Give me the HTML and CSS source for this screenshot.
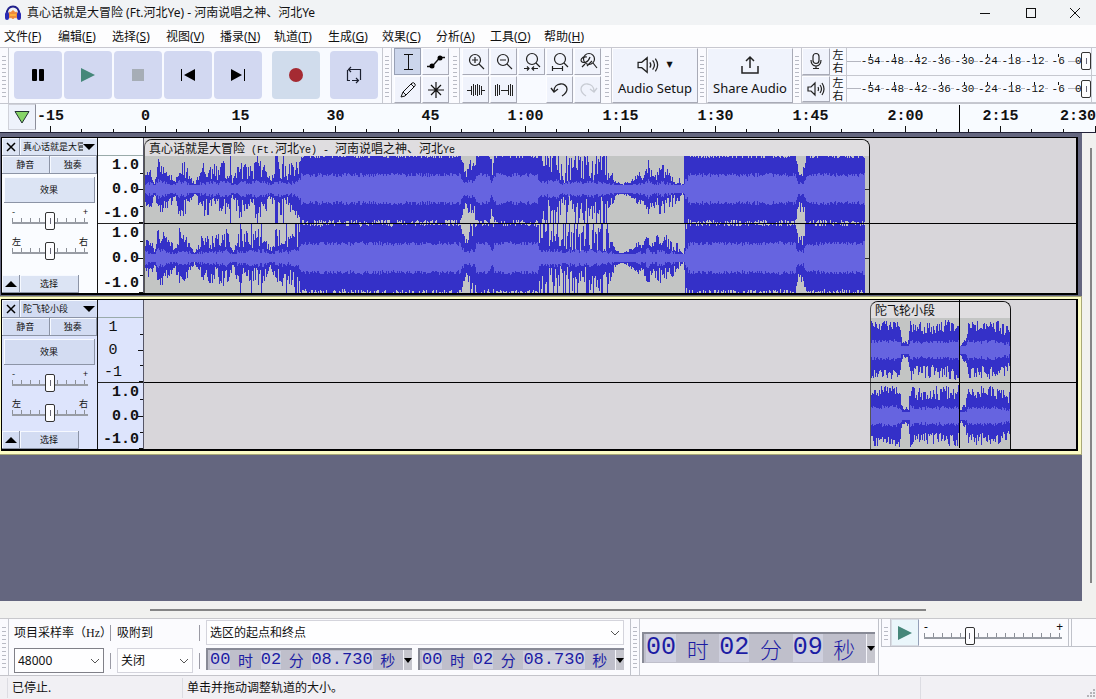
FILE: index.html
```html
<!DOCTYPE html>
<html lang="zh-CN">
<head>
<meta charset="utf-8">
<title>真心话就是大冒险 (Ft.河北Ye) - 河南说唱之神、河北Ye</title>
<link rel="stylesheet" href="styles.css">
</head>
<body>
<header class="titlebar">
  <svg class="logo" width="18" height="18" viewBox="0 0 18 18">
    <path d="M4 11c1-3 2-4 3-2 1-3 3-3 4 0 1-2 2-1 3 2-1 3-2 4-3 2-1 2-3 2-4 0-1 2-2 1-3-2z" fill="#f08a3c" stroke="#f08a3c"/>
    <path d="M6 11h6" stroke="#ffb03c" stroke-width="2"/>
    <path d="M3 10C2 0 16 0 15 10" fill="none" stroke="#20208c" stroke-width="2"/>
    <rect x="1" y="8" width="4" height="8" rx="2" fill="#2c2cb4"/>
    <rect x="13" y="8" width="4" height="8" rx="2" fill="#2c2cb4"/>
  </svg>
  <h1 class="title">真心话就是大冒险 (Ft.河北Ye) - 河南说唱之神、河北Ye</h1>
  <div class="win">
    <button aria-label="最小化"><svg width="12" height="12"><path d="M1 6.5h10" stroke="#111"/></svg></button>
    <button aria-label="最大化"><svg width="12" height="12"><rect x="1.5" y="1.5" width="9" height="9" fill="none" stroke="#111"/></svg></button>
    <button aria-label="关闭"><svg width="12" height="12"><path d="M1 1l10 10M11 1L1 11" stroke="#111"/></svg></button>
  </div>
</header>

<nav class="menubar">
  <button>文件(<u>F</u>)</button><button>编辑(<u>E</u>)</button><button>选择(<u>S</u>)</button><button>视图(<u>V</u>)</button><button>播录(<u>N</u>)</button><button>轨道(<u>T</u>)</button><button>生成(<u>G</u>)</button><button>效果(<u>C</u>)</button><button>分析(<u>A</u>)</button><button>工具(<u>O</u>)</button><button>帮助(<u>H</u>)</button>
</nav>

<section class="toolbars">
  <i class="grip"></i>
  <div class="transport">
    <button aria-label="暂停"><svg width="16" height="16"><rect x="2" y="2" width="5" height="12" rx="1"/><rect x="9" y="2" width="5" height="12" rx="1"/></svg></button>
    <button aria-label="播放"><svg width="16" height="16"><path d="M1 1l14 7-14 7z" fill="#46877a"/></svg></button>
    <button aria-label="停止"><svg width="16" height="16"><path d="M2 2h12v12H2z" fill="#a6adb6"/></svg></button>
    <button aria-label="跳至开头"><svg width="16" height="16"><path d="M1 2h1v12H1zM15 2v12L4 8z"/></svg></button>
    <button aria-label="跳至结尾"><svg width="16" height="16"><path d="M14 2h1v12h-1zM1 2v12l11-6z"/></svg></button>
    <button class="rec" aria-label="录制"><svg width="16" height="16"><circle cx="8" cy="8" r="7" fill="#a52a32"/></svg></button>
    <button class="loop" aria-label="循环"><svg width="18" height="18" fill="none" stroke="#1c2030" stroke-width="1.200"><path d="M5 14.500H2.500V4M4 3.500h11.500V14M6 1L3.500 3.500 6 6M7 14.500h6M11 12l2.500 2.500L11 17"/></svg></button>
  </div>
  <i class="grip"></i>
  <div class="keys two">
    <button class="on" aria-label="选择工具"><svg width="20" height="20" fill="none" stroke="#111"><path d="M6 2.500h9M6 17.500h9M10.500 2.500v15"/></svg></button>
    <button aria-label="包络工具"><svg width="20" height="20"><path d="M1 14.500h5l8-9h5" fill="none" stroke="#111" stroke-width="1.300"/><circle cx="6" cy="14" r="2.500"/><circle cx="14" cy="6" r="2.500"/></svg></button>
    <button aria-label="绘制工具"><svg width="20" height="20" fill="none" stroke="#111"><path d="M3 17l2-5 9-9q2-1 3 1 1 1-1 3l-9 9zM5 12l3 3M13 4l3 3"/></svg></button>
    <button aria-label="多功能工具"><svg width="20" height="20" fill="none" stroke="#111" stroke-width="1.200"><path d="M10 2v16M2 10h16M5 5l10 10M15 5L5 15"/></svg></button>
  </div>
  <i class="grip"></i>
  <div class="keys five">
    <button aria-label="放大"><svg width="20" height="20" fill="none" stroke="#222" stroke-width="1.200"><circle cx="9" cy="8" r="5.500"/><path d="M13 12l5 5M6 8h6M9 5v6"/></svg></button>
    <button aria-label="缩小"><svg width="20" height="20" fill="none" stroke="#222" stroke-width="1.200"><circle cx="9" cy="8" r="5.500"/><path d="M13 12l5 5M6 8h6"/></svg></button>
    <button aria-label="适应选区"><svg width="20" height="20" fill="none" stroke="#222" stroke-width="1.200"><circle cx="10" cy="7" r="5.500"/><path d="M14 11l4 4M2 16.500h5M10 16.500h6M5 14.500l2 2-2 2M12 14.500l-2 2 2 2"/></svg></button>
    <button aria-label="适应项目"><svg width="20" height="20" fill="none" stroke="#222" stroke-width="1.200"><circle cx="10" cy="7" r="5.500"/><path d="M14 11l4 4M2 16.500h11M2.500 14v5M12.500 14v5"/></svg></button>
    <button aria-label="切换缩放"><svg width="20" height="20" fill="none" stroke="#222" stroke-width="1.200"><circle cx="11" cy="7" r="5.500"/><path d="M15 11l4 5M7 12l-3 3M9 5C3 4 2 9 4 10s6 1 8-5M9 14l5-5"/></svg></button>
    <button aria-label="修剪"><svg width="20" height="20" fill="none" stroke="#222"><path d="M1 10.500h4M15 10.500h4M5.500 6v9M7.500 4v12M9.500 5v10M11.500 4v12M13.500 5v10M15.500 6v9"/></svg></button>
    <button aria-label="静音选区"><svg width="20" height="20" fill="none" stroke="#222"><path d="M1.500 5v11M3.500 4v12M5.500 5v10M7 10.500h7M14.500 5v10M16.500 4v12M18.500 5v11"/></svg></button>
    <span></span>
    <button aria-label="撤销"><svg width="20" height="20" fill="none" stroke="#222" stroke-width="1.300"><path d="M4 11C4 2 17 2 17 9c0 3-2 5-5 7M1 8l3 4 4-3"/></svg></button>
    <button aria-label="重做"><svg width="20" height="20" fill="none" stroke="#c8ccd4" stroke-width="1.300"><path d="M16 11C16 2 3 2 3 9c0 3 2 5 5 7M19 8l-3 4-4-3"/></svg></button>
  </div>
  <i class="grip"></i>
  <button class="big"><span><svg width="24" height="20" viewBox="0 0 26 22" fill="none" stroke="#222" stroke-width="1.400"><path d="M1 8v6h4l6 5V3L5 8zM14 8q2 3 0 6M17 6q4 5 0 10M20 4q5 7 0 14"/></svg><b>▼</b></span>Audio Setup</button>
  <i class="grip"></i>
  <button class="big"><span><svg width="20" height="22" fill="none" stroke="#222" stroke-width="1.500"><path d="M2 12v7h16v-7M10 14V3M6 7l4-4 4 4"/></svg></span>Share Audio</button>
  <i class="grip"></i>
  <div class="meters">
    <div class="meterrow">
      <button aria-label="录音电平"><svg width="16" height="18" fill="none" stroke="#222" stroke-width="1.200"><rect x="5" y="1.500" width="6" height="10" rx="3"/><path d="M3 8c0 8 10 8 10 0M8 14v3M5 16.500h6"/></svg></button>
      <div class="lr"><span>左</span><span>右</span></div>
      <div class="meter"><ol><li>-54</li><li>-48</li><li>-42</li><li>-36</li><li>-30</li><li>-24</li><li>-18</li><li>-12</li><li>-6</li></ol><span class="zero">0</span><input type="range" aria-label="录音音量" value="100"></div>
    </div>
    <div class="meterrow">
      <button aria-label="播放电平"><svg width="18" height="18" fill="none" stroke="#222" stroke-width="1.200"><path d="M1 7v4h3l4 4V3L4 7zM11 7q1 2 0 4M13 5q3 4 0 8M15 3q4 6 0 12"/></svg></button>
      <div class="lr"><span>左</span><span>右</span></div>
      <div class="meter"><ol><li>-54</li><li>-48</li><li>-42</li><li>-36</li><li>-30</li><li>-24</li><li>-18</li><li>-12</li><li>-6</li></ol><span class="zero">0</span><input type="range" aria-label="播放音量" value="100"></div>
    </div>
  </div>
</section>

<section class="ruler">
  <button class="pin" aria-label="固定播放头"><svg width="16" height="14"><path d="M1 1.500h14L8 13z" fill="#86d468" stroke="#233"/></svg></button>
  <ol class="times"><li>-15</li><li>0</li><li>15</li><li>30</li><li>45</li><li>1:00</li><li>1:15</li><li>1:30</li><li>1:45</li><li>2:00</li><li>2:15</li><li>2:30</li></ol>
  <i class="playhead"></i>
</section>

<main class="project">
  <div class="tracks">
    <article class="frame">
      <div class="track">
        <div class="panel">
          <div class="prow"><button class="sq" aria-label="关闭轨道"><svg width="10" height="10"><path d="M1 1l8 8M9 1L1 9" stroke="#000" stroke-width="1.500"/></svg></button><button class="name"><span>真心话就是大冒险</span><svg width="12" height="6"><path d="M0 0h12L6 6z"/></svg></button></div>
          <div class="prow"><button class="half">静音</button><button class="half">独奏</button></div>
          <button class="fx">效果</button>
          <div class="knob"><span>-</span><span>+</span><input type="range" aria-label="增益" value="50"></div>
          <div class="knob"><span>左</span><span>右</span><input type="range" aria-label="声相" value="50"></div>
          <div class="prow last"><button class="sq" aria-label="折叠"><svg width="12" height="6"><path d="M0 6h12L6 0z"/></svg></button><button class="sel">选择</button></div>
        </div>
        <div class="scale">
          <div class="cap"></div>
          <div class="marks"><span>1.0</span><span>0.0</span><span>-1.0</span></div>
          <div class="marks"><span>1.0</span><span>0.0</span><span>-1.0</span></div>
        </div>
        <div class="lane">
          <div class="clip song">
            <div class="cliphead">真心话就是大冒险<small> (Ft.</small>河北<small>Ye) - </small>河南说唱之神、河北<small>Ye</small></div>
            <svg class="wave" data-shape="song" data-seed="7" width="724" height="67"></svg>
            <svg class="wave" data-shape="song" data-seed="19" width="724" height="69"></svg>
          </div>
        </div>
      </div>
    </article>
    <article class="frame focus">
      <div class="track">
        <div class="panel">
          <div class="prow"><button class="sq" aria-label="关闭轨道"><svg width="10" height="10"><path d="M1 1l8 8M9 1L1 9" stroke="#000" stroke-width="1.500"/></svg></button><button class="name"><span>陀飞轮小段</span><svg width="12" height="6"><path d="M0 0h12L6 6z"/></svg></button></div>
          <div class="prow"><button class="half">静音</button><button class="half">独奏</button></div>
          <button class="fx">效果</button>
          <div class="knob"><span>-</span><span>+</span><input type="range" aria-label="增益" value="50"></div>
          <div class="knob"><span>左</span><span>右</span><input type="range" aria-label="声相" value="50"></div>
          <div class="prow last"><button class="sq" aria-label="折叠"><svg width="12" height="6"><path d="M0 6h12L6 0z"/></svg></button><button class="sel">选择</button></div>
        </div>
        <div class="scale">
          <div class="cap"></div>
          <div class="marks short"><span>1</span><span>0</span><span>-1</span></div>
          <div class="marks"><span>1.0</span><span>0.0</span><span>-1.0</span></div>
        </div>
        <div class="lane">
          <div class="clip piece">
            <div class="cliphead">陀飞轮小段</div>
            <svg class="wave" data-shape="piece" data-seed="3" width="139" height="64"></svg>
            <svg class="wave" data-shape="piece" data-seed="11" width="139" height="66"></svg>
          </div>
          <i class="playhead"></i>
        </div>
      </div>
    </article>
  </div>
  <div class="vscroll"><i></i></div>
</main>
<div class="hscroll"><i></i></div>

<footer class="dock">
  <i class="grip"></i>
  <div class="selbar">
    <div class="field rate"><label for="rate">项目采样率（Hz）</label><div class="pick strong"><select id="rate"><option>48000</option></select><svg width="10" height="6"><path d="M1 1l4 4 4-4" fill="none" stroke="#555"/></svg></div></div>
    <div class="bars"><i></i><i></i></div>
    <div class="field snap"><label for="snap">吸附到</label><div class="pick"><select id="snap"><option>关闭</option></select><svg width="10" height="6"><path d="M1 1l4 4 4-4" fill="none" stroke="#555"/></svg></div></div>
    <div class="bars"><i></i><i></i></div>
    <div class="range">
      <div class="pick"><select aria-label="选区模式"><option>选区的起点和终点</option></select><svg width="10" height="6"><path d="M1 1l4 4 4-4" fill="none" stroke="#555"/></svg></div>
      <div class="pair">
        <div class="time"><b>00</b><span>时</span><b>02</b><span>分</span><b>08.730</b><span>秒</span><button aria-label="格式"><svg width="8" height="5"><path d="M0 0h8L4 5z"/></svg></button></div>
        <div class="time"><b>00</b><span>时</span><b>02</b><span>分</span><b>08.730</b><span>秒</span><button aria-label="格式"><svg width="8" height="5"><path d="M0 0h8L4 5z"/></svg></button></div>
      </div>
    </div>
  </div>
  <i class="grip"></i>
  <div class="clock"><div class="time large"><b>00</b><span>时</span><b>02</b><span>分</span><b>09</b><span>秒</span><button aria-label="格式"><svg width="8" height="5"><path d="M0 0h8L4 5z"/></svg></button></div></div>
  <div class="speed">
    <i class="grip"></i>
    <button aria-label="按速度播放"><svg width="16" height="16"><path d="M1 1l14 7-14 7z" fill="#46877a"/></svg></button>
    <div class="knob"><span>-</span><span>+</span><input type="range" aria-label="播放速度" value="32"></div>
    <i class="end"></i>
  </div>
</footer>
<div class="status"><span>已停止.</span><span>单击并拖动调整轨道的大小。</span><span><svg width="10" height="10" fill="#b4b4b8"><path d="M7 0h2v2H7zM4 3h2v2H4zM7 3h2v2H7zM1 6h2v2H1zM4 6h2v2H4zM7 6h2v2H7z"/></svg></span></div>
<script src="waves.js"></script>
</body>
</html>
```

FILE: styles.css
```css
* { box-sizing: border-box; }
body {
  margin: 0;
  height: 100vh;
  display: flex;
  flex-direction: column;
  overflow: hidden;
  background: #f0f0f3;
  color: #111;
  font: 12px/16px "Noto Sans", "Noto Sans CJK SC", sans-serif;
}
button, select, input { font: inherit; color: inherit; margin: 0; }
button {
  display: flex;
  align-items: center;
  justify-content: center;
  padding: 0;
  border: 0;
  background: none;
}
svg { display: block; flex: none; }
ol { list-style: none; margin: 0; padding: 0; }

.titlebar { display: flex; align-items: center; height: 25px; padding-left: 4px; background: #f1f3f5; }
.title { margin: 0 0 0 5px; flex: 1; font-size: 12px; font-weight: 400; }
.win { display: flex; }
.win button { width: 46px; height: 22px; }
.win button:last-child { width: 42px; }

.menubar { display: flex; gap: 12px; height: 22px; padding: 2px 0 0 4px; background: #fdfdfe; }
.menubar button { min-width: 42px; justify-content: flex-start; white-space: pre; }

.toolbars {
  display: flex;
  height: 57px;
  border-top: 1px solid #c8c8d0;
  border-bottom: 1px solid #c4c6ce;
  background: #f8faff;
}
.grip {
  flex: none;
  width: 9px;
  border-right: 1px solid #c6c8d0;
  background:
    repeating-linear-gradient(#fafafe 0 3px, #b8bac4 3px 4px) 2px 5px / 4px calc(100% - 10px) no-repeat,
    #fafafe;
}
.transport { display: flex; gap: 2px; padding: 3px 4px 4px 5px; border-right: 1px solid #c6c8d0; }
.transport button { width: 48px; border-radius: 4px; background: #d2d8f1; }
.transport .rec { margin-left: 8px; background: #d0dcec; }
.transport .loop { margin-left: 8px; }
.keys { display: grid; gap: 1px 1px; padding: 0 2px; grid-template-rows: 1fr 1fr; }
.two { grid-template-columns: 27px 27px; }
.five { grid-template-columns: repeat(5, 27px); }
.keys button, .big, .meterrow button {
  border: 1px solid #fdfdff;
  border-right-color: #a8aab6;
  border-bottom-color: #a8aab6;
  background: #f0f3fc;
}
.keys .on { background: #ccd6ec; border-color: #98a0b4; }
.big { width: 86px; flex-direction: column; padding-bottom: 4px; font-family: "Noto Sans", sans-serif; font-size: 13px; line-height: 18px; }
.big span { display: flex; align-items: center; gap: 5px; height: 28px; }
.big b { font: 8px/10px "DejaVu Sans", sans-serif; }
.meters { flex: 1; display: flex; flex-direction: column; }
.meterrow { flex: 1; display: flex; min-height: 0; padding-right: 4px; border-bottom: 1px solid #c6c8d0; }
.meterrow button { width: 28px; }
.lr { width: 16px; display: flex; flex-direction: column; align-items: center; justify-content: center; font: 11px/13px "Noto Sans CJK SC", sans-serif; }
.meter {
  position: relative;
  flex: 1;
  display: flex;
  align-items: center;
  padding-left: 12px;
  border-left: 1px solid #c6c8d0;
  border-right: 1px solid #c6c8d0;
  background: linear-gradient(#b4b6c0, #b4b6c0) 0 50% / 100% 1px no-repeat;
}
.meter ol { flex: 1; display: flex; }
.meter li {
  flex: 1;
  text-align: center;
  font: 11px/14px "Liberation Mono", monospace;
  background:
    linear-gradient(#111, #111) 50% 0 / 1px 3px no-repeat,
    linear-gradient(#f8faff, #f8faff) 50% 0 / 20px 100% no-repeat;
}
.meter .zero { width: 21px; padding-left: 5px; font: 11px/14px "Liberation Mono", monospace; }
.meter input { position: absolute; inset: 0 2px 0 0; width: 100%; height: 100%; background: none; }

input[type="range"] { appearance: none; -webkit-appearance: none; outline: 0; }
input[type="range"]::-webkit-slider-thumb {
  -webkit-appearance: none;
  width: 10px;
  height: 18px;
  border: 1px solid #333;
  border-radius: 2px;
  background: linear-gradient(#667, #667) 50% 50% / 1px 6px no-repeat, #fdfdff;
}

.ruler {
  position: relative;
  display: flex;
  height: 29px;
  border-bottom: 1px solid #222238;
  background: #f8fbff;
}
.pin { position: absolute; left: 8px; top: 0; width: 28px; height: 26px; border: 1px solid #d0d2da; border-right-color: #8c8e9a; background: #eef2fb; }
.times {
  flex: 1;
  display: flex;
  overflow: hidden;
  padding-left: 3px;
  background:
    repeating-linear-gradient(90deg, #111 0 1px, transparent 1px 95px) 50px 100% / 100% 6px no-repeat,
    repeating-linear-gradient(90deg, transparent 0 31px, #111 31px 32px, transparent 32px 63px, #111 63px 64px, transparent 64px 95px) 50px 100% / 100% 3px no-repeat;
}
.times li { flex: none; width: 95px; text-align: center; font: bold 15px/26px "Liberation Mono", monospace; }
.times li:last-child { flex: 1; text-align: right; }
.ruler .playhead { position: absolute; left: 959px; top: 1px; bottom: 0; width: 1px; background: #000; }

.project { flex: 1; display: flex; min-height: 0; background: #64667f; }
.tracks { flex: 1; min-width: 0; }
.frame { padding: 4px 4px 1px 1px; }
.focus { padding: 3px 4px 3px 1px; background: #fcfcc4; border-bottom: 1px solid #a8a878; box-shadow: inset 0 1px #a8a878, inset -1px 0 #a8a878; }
.track { display: flex; border: solid #000; border-width: 1px 2px 2px 1px; background: #d8d6da; }
.panel {
  flex: none;
  width: 96px;
  display: flex;
  flex-direction: column;
  border-right: 1px solid #111;
  background: #fafcff;
  font: 9px/12px "Noto Sans CJK SC", sans-serif;
}
.focus .panel, .focus .scale { background: #dde4fc; }
.prow { display: flex; height: 18px; }
.last { margin-top: auto; }
.panel button { border: solid #8c94a6; border-width: 0 1px 1px 0; background: #dce4f4; box-shadow: inset 1px 1px #f6f9ff; }
.focus .panel button { background: #d3dcf2; }
.panel .sq { width: 18px; }
.panel .name { flex: 1; min-width: 0; justify-content: space-between; padding: 0 2px 0 3px; border-right: 0; }
.name span { width: 62px; overflow: hidden; white-space: nowrap; text-align: left; }
.panel .half { flex: 1; }
.panel .fx { height: 26px; margin: 3px 2px 6px; }
.panel .sel { width: 59px; }
.knob {
  display: grid;
  grid-template-columns: 1fr 1fr;
  grid-template-rows: 6px 18px;
  height: 30px;
  padding: 0 11px 0 10px;
}
.knob span:nth-child(2) { text-align: right; }
.knob span { line-height: 6px; }
.knob input {
  grid-column: 1 / 3;
  width: 76px;
  height: 18px;
  margin: -3px 0 0 0;
  background:
    linear-gradient(#989ca4, #989ca4) 0 10px / 100% 2px no-repeat,
    repeating-linear-gradient(90deg, #8c9098 0 1px, transparent 1px 9px) 0 6px / 100% 4px no-repeat;
}

.scale { flex: none; width: 46px; border-right: 1px solid #556; background: #fafcff; }
.cap { height: 18px; border-bottom: 1px solid #9aa; }
.marks {
  display: flex;
  flex-direction: column;
  justify-content: space-between;
  align-items: flex-end;
  height: 68px;
  padding: 1px 4px 0 0;
  border-bottom: 1px solid #222;
  font: bold 15px/18px "Liberation Mono", monospace;
  background:
    linear-gradient(#111, #111) 100% 50% / 5px 1px no-repeat,
    linear-gradient(#111, #111) 100% 25% / 3px 1px no-repeat,
    linear-gradient(#111, #111) 100% 75% / 3px 1px no-repeat,
    linear-gradient(#111, #111) 100% 100% / 4px 1px no-repeat;
}
.marks:last-child { height: 69px; border-bottom: 0; }
.focus .marks { height: 65px; }
.focus .marks:last-child { height: 66px; }
.short { align-items: stretch; padding-left: 5px; }
.short span { width: 20px; text-align: center; font-weight: 400; }

.lane { position: relative; flex: 1; min-width: 0; padding-top: 1px; overflow: hidden; }
.lane::after { content: ""; position: absolute; left: 0; right: 0; top: 85px; height: 1px; background: #000; }
.focus .lane::after { top: 82px; }
.clip { width: 726px; border: 1px solid #111; border-bottom: 0; border-left-color: #555; border-radius: 8px 8px 0 0; background: #c3c5c4; overflow: hidden; }
.piece { width: 141px; margin-left: 726px; }
.cliphead { height: 16px; padding-left: 4px; background: #dfdde0; font: 12px/16px "Noto Sans CJK SC", sans-serif; white-space: pre; }
.cliphead small { font: 10px/16px "Liberation Mono", monospace; }
.wave + .wave { margin-top: 1px; }
.wave { shape-rendering: crispEdges; }
.lane .playhead { position: absolute; left: 815px; top: 0; bottom: 1px; width: 1px; background: #000; }

.vscroll { width: 14px; padding: 15px 4px 18px 8px; background: #f1f1ef; }
.vscroll i { display: block; width: 2px; height: 100%; background: #858585; }
.hscroll { height: 17px; padding: 8px 170px 0 150px; background: #f1f1ef; }
.hscroll i { display: block; height: 2px; background: #858585; }

.dock { display: flex; height: 58px; border-top: 1px solid #c8c8cc; border-bottom: 1px solid #c4c4ca; background: #fbfbfe; }
.selbar { display: flex; padding: 1px 6px 0 5px; border-right: 1px solid #c0c2ca; }
.field { display: flex; flex-direction: column; gap: 3px; }
.field label { height: 25px; line-height: 27px; white-space: nowrap; font-family: "Liberation Serif", "Noto Sans CJK SC", sans-serif; }
.rate { width: 90px; }
.snap { width: 76px; }
.pick { position: relative; height: 25px; }
.pick select { appearance: none; width: 100%; height: 100%; padding: 0 3px; border: 1px solid #d4d4dc; border-radius: 0; background: #fefeff; }
.strong select { border-color: #808088; }
.pick svg { position: absolute; right: 4px; top: 10px; }
.bars { width: 13px; display: flex; flex-direction: column; gap: 12px; padding: 5px 6px; }
.bars i { flex: none; width: 1px; height: 16px; background: #9a9aa4; }
.range { width: 418px; display: flex; flex-direction: column; gap: 3px; }
.pair { display: flex; gap: 6px; }
.time {
  flex: 1;
  display: flex;
  align-items: center;
  justify-content: space-between;
  height: 22px;
  padding-left: 2px;
  border: 1px solid #888a96;
  border-width: 2px 0 0 2px;
  background: #bfbfcb;
  color: #1c1ca4;
  font: 15px/18px "Noto Sans CJK SC", sans-serif;
}
.time b { background: #cfd0de; font: 17px/18px "Liberation Mono", monospace; }
.time span { font-weight: 400; }
.time button { width: 9px; height: 100%; background: #c6c6ce; border-left: 1px solid #f4f4fa; color: #000; }
.clock { width: 239px; display: flex; align-items: center; padding: 0 3px 0 2px; border-right: 1px solid #c0c2ca; }
.large { height: 31px; font-size: 22px; line-height: 28px; }
.large b { font-size: 25px; line-height: 28px; }
.large span { font-weight: 300; }
.speed { flex: 1; display: flex; height: 28px; margin-left: 2px; border: solid #c0c2ca; border-width: 0 0 1px 1px; }
.speed button { width: 28px; border: 1px solid #d8dce4; border-right-color: #94a0b8; background: #eaf6fb; }
.speed .knob { width: 149px; height: 27px; padding: 5px 5px 0; }
.speed .knob input { width: 138px; }
.speed .end { width: 4px; border: solid #c0c2ca; border-width: 0 1px; }

.status { display: flex; height: 23px; align-items: center; background: #f1f0f4; }
.status span { padding-left: 4px; border-left: 1px solid #dcdce2; line-height: 20px; }
.status span:first-child { margin-left: 7px; width: 175px; }
.status span:nth-child(2) { width: 738px; }
.status span:last-child { flex: 1; display: flex; justify-content: flex-end; align-items: flex-end; height: 22px; }
```

FILE: waves.js
```js
// Envelope points: [x, peak, jitter, spike chance]; peak is a share of the half height.
const shapes = {
  song: {
    end: 720, rms: 0.42,
    points: [
      [0, .4, .3, 0], [6, .45, .3, 0], [10, .18, .1, 0], [13, .7, .5, 0], [20, .55, .4, 0],
      [27, .38, .3, 0], [30, .2, .1, 0], [34, .65, .5, 0], [41, .55, .5, 0], [46, .3, .15, 0],
      [50, .13, .05, 0], [54, .4, .3, 0], [59, .55, .5, 0], [72, .5, .5, 0], [82, .6, .6, .06],
      [88, .22, .15, 0], [94, .6, .6, .1], [104, .5, .5, .1], [112, .6, .6, .1],
      [121, .55, .5, .1], [126, .22, .1, 0], [131, .6, .6, .12], [142, .5, .5, .12],
      [153, .6, .6, .2], [156, 1, .18, 0], [316, 1, .18, 0], [318, .7, .3, 0], [321, .42, .2, 0],
      [326, .7, .6, .2], [330, .6, .3, .1], [331, 1, .18, 0], [345, 1, .18, 0], [347, .5, .7, .3],
      [349, 1, .18, 0], [393, 1, .18, 0], [395, .6, .7, .3], [412, .65, .7, .3], [420, .35, .4, .1],
      [424, .6, .8, .3], [462, .55, .8, .25], [467, .4, .3, .1], [471, .2, .05, 0],
      [477, .14, .03, 0], [484, .2, .1, 0], [495, .42, .2, 0], [498, .3, .12, 0],
      [503, .7, .5, .05], [508, .38, .3, 0], [516, .55, .5, 0], [525, .4, .4, 0],
      [534, .28, .3, 0], [537, .12, .05, 0], [539, .2, .3, .3], [541, .9, .4, .2], [544, 1, .18, 0],
      [651, 1, .18, 0], [653, .5, .3, 0], [659, .55, .4, 0], [661, 1, .18, 0], [720, 1, .18, 0]
    ]
  },
  piece: {
    end: 139, rms: 0.4,
    points: [
      [0, .76, .3, 0], [29, .78, .3, 0], [31, .3, .2, 0], [33, .17, .1, 0], [38, .3, .2, 0],
      [39, .8, .4, 0], [44, .66, .4, 0], [60, .7, .45, 0], [88, .74, .45, 0], [89, .15, .1, 0],
      [95, .35, .2, 0], [97, .75, .4, 0], [115, .7, .4, 0], [128, .72, .4, 0], [139, .55, .35, 0]
    ]
  }
};

function generator(seed) {
  let s = seed;
  return () => {
    s = (s * 16807) % 2147483647;
    return s / 2147483647;
  };
}

function envelope(points, x) {
  let i = 1;
  while (i < points.length - 1 && points[i][0] < x) i++;
  const a = points[i - 1], b = points[i];
  const t = Math.min(1, (x - a[0]) / (b[0] - a[0]));
  return a.map((v, k) => v + (b[k] - v) * t);
}

function addPath(svg, d, color) {
  const path = document.createElementNS("http://www.w3.org/2000/svg", "path");
  path.setAttribute("d", d);
  path.setAttribute("fill", color);
  svg.appendChild(path);
}

document.querySelectorAll(".wave").forEach(svg => {
  const { points, end, rms } = shapes[svg.dataset.shape];
  const random = generator(Number(svg.dataset.seed) * 7919);
  const half = svg.height.baseVal.value / 2;
  let outer = "", inner = "";
  for (let x = 0; x < end; x++) {
    const [, peak, jitter, spike] = envelope(points, x + .5);
    const full = random() < spike ? 1 : 0;
    const level = () => Math.min(1, Math.max(.1, full || peak + jitter * (random() - .5)));
    const up = Math.round(level() * half), down = Math.round(level() * half);
    const core = Math.min(peak * .75, Math.max(.13, (peak > .95 ? rms : Math.min(rms * .7, peak * .35)) + .12 * (random() - .5)));
    const c = Math.round(core * half);
    const mid = Math.floor(half);
    outer += `M${x} ${mid - up}h1v${up + down}h-1z`;
    inner += `M${x} ${mid - c}h1v${c * 2}h-1z`;
  }
  addPath(svg, outer, "#3430c8");
  addPath(svg, inner, "#6664e0");
  if (svg.dataset.shape === "song") addPath(svg, `M720 ${Math.floor(half)}h4v1h-4z`, "#333");
});
```
